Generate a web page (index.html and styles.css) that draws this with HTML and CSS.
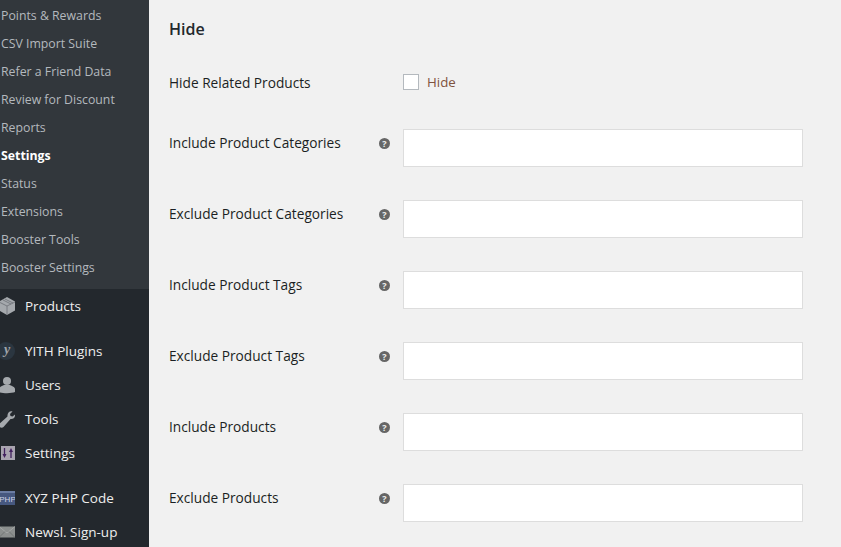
FILE: index.html
```html
<!DOCTYPE html>
<html lang="en">
<head>
    <meta charset="UTF-8">
    <title>Settings</title>
    <link rel="stylesheet" href="styles.css">
</head>
<body>
    <div class="sidebar">
        <ul class="submenu">
            <li>Points &amp; Rewards</li>
            <li>CSV Import Suite</li>
            <li>Refer a Friend Data</li>
            <li>Review for Discount</li>
            <li>Reports</li>
            <li class="current">Settings</li>
            <li>Status</li>
            <li>Extensions</li>
            <li>Booster Tools</li>
            <li>Booster Settings</li>
        </ul>
        <ul class="menu">
            <li>
                <svg class="icon" viewBox="0 0 15 18"><path fill="#a5a9ad" d="M-1 4.500 7 0l8 4.500v9L7 18l-8-4.500z"/><path fill="none" stroke="#6c7076" stroke-width=".8" d="M-1 5l8 4 8-4M7 9v9M3 3l8 4M5 2l8 4"/></svg>
                Products
            </li>
            <li class="gap-before">
                <svg class="icon" viewBox="0 0 15 18"><circle cx="6" cy="9" r="9" fill="#2b3640"/><text x="7" y="12" class="yith">y</text></svg>
                YITH Plugins
            </li>
            <li>
                <svg class="icon" viewBox="0 0 15 18"><circle cx="7" cy="5" r="4" fill="#a5a9ad"/><path fill="#a5a9ad" d="M-1 16v-3c0-2 3-3 5-4h6c2 1 5 2 5 4v3c-3 1.500-13 1.500-16 0z"/></svg>
                Users
            </li>
            <li>
                <svg class="icon" viewBox="0 0 15 18"><path fill="#a5a9ad" d="M15 4.500c.5 2.500-1.500 5-4.500 4.500L3.500 17C2.500 18 .5 17.800-.300 17c-1-1-.8-2.700 0-3.600L7.500 6.500C7 3.500 9.500.500 12.500 1.500L10 4l.5 2 2 .5z"/></svg>
                Tools
            </li>
            <li>
                <svg class="icon" viewBox="0 0 15 18"><rect x="1" y="2" width="14" height="14" fill="#a9a4b0"/><path fill="none" stroke="#43225f" stroke-width="1.300" d="M4.500 4v8M11 7v7"/><path fill="#43225f" d="M2.500 10h4L4.500 14zM9 8l2-4 2 4z"/></svg>
                Settings
            </li>
            <li class="gap-before">
                <svg class="icon" viewBox="0 0 15 18"><rect x="-1" y="2" width="16" height="14" fill="#46587f"/><rect x="-1" y="2" width="16" height="2" fill="#6b7da3"/><text x="7.500" y="12.500" class="php">PHP</text></svg>
                XYZ PHP Code
            </li>
            <li>
                <svg class="icon" viewBox="0 0 15 18"><rect x="-1" y="3.500" width="16" height="11" fill="#8b8f8e"/><path fill="none" stroke="#a9adac" stroke-width=".8" d="M-1 3.500l8 6.500 8-6.500"/><path fill="none" stroke="#6a6e6e" stroke-width=".8" d="M-1 14.500l6-6M15 14.500l-6-6"/></svg>
                Newsl. Sign-up
            </li>
        </ul>
    </div>

    <div class="content">
        <h2>Hide</h2>
        <div class="row first">
            <div class="label">Hide Related Products</div>
            <label class="check"><span class="box"></span>Hide</label>
        </div>
        <div class="row">
            <div class="label">Include Product Categories<span class="help">?</span></div>
            <div class="field"></div>
        </div>
        <div class="row">
            <div class="label">Exclude Product Categories<span class="help">?</span></div>
            <div class="field"></div>
        </div>
        <div class="row">
            <div class="label">Include Product Tags<span class="help">?</span></div>
            <div class="field"></div>
        </div>
        <div class="row">
            <div class="label">Exclude Product Tags<span class="help">?</span></div>
            <div class="field"></div>
        </div>
        <div class="row">
            <div class="label">Include Products<span class="help">?</span></div>
            <div class="field"></div>
        </div>
        <div class="row">
            <div class="label">Exclude Products<span class="help">?</span></div>
            <div class="field"></div>
        </div>
    </div>
</body>
</html>
```

FILE: styles.css
```css
html, body {
    margin: 0;
    height: 547px;
    overflow: hidden;
}

body {
    display: flex;
    font-family: "Open Sans", sans-serif;
    font-size: 13px;
    background-color: #f1f1f1;
    color: #23282d;
}

ul {
    list-style: none;
    margin: 0;
    padding: 0;
}

.sidebar {
    width: 149px;
    flex-shrink: 0;
    background-color: #23282d;
}

.submenu {
    background-color: #32373c;
    padding: 2px 0 8px 1px;
    height: 279px;
}

.submenu li {
    height: 28px;
    line-height: 27px;
    color: #b4b9be;
    font-size: 12.300px;
    white-space: nowrap;
}

.submenu .current {
    color: #fff;
    font-weight: 700;
}

.menu li {
    height: 34px;
    display: flex;
    align-items: center;
    gap: 10px;
    font-size: 13.500px;
    color: #eee;
    white-space: nowrap;
}

.menu .gap-before {
    margin-top: 11px;
}

.icon {
    width: 15px;
    height: 18px;
    flex-shrink: 0;
    overflow: hidden;
}

.php {
    font-family: "Liberation Sans", sans-serif;
    font-size: 8px;
    fill: #cdd4e4;
    text-anchor: middle;
}

.yith {
    font-family: "Liberation Serif", serif;
    font-size: 14px;
    font-style: italic;
    font-weight: 700;
    fill: #a0a5aa;
    text-anchor: middle;
}

.content {
    flex: 1;
    padding-left: 20px;
}

h2 {
    margin: 0;
    padding-top: 18px;
    height: 40px;
    line-height: 23px;
    font-size: 16px;
    font-weight: 600;
}

.row {
    display: flex;
    height: 71px;
}

.row.first {
    align-items: flex-start;
}

.row.first .label {
    padding-top: 15px;
}

.label {
    width: 234px;
    flex-shrink: 0;
    position: relative;
    font-size: 13.700px;
    font-weight: 500;
    color: #1b1f23;
    line-height: 20px;
    padding-top: 4px;
}

.help {
    position: absolute;
    left: 210px;
    top: 9px;
    width: 11px;
    height: 11px;
    border-radius: 50%;
    background-color: #666;
    color: #eee;
    font-size: 9px;
    font-weight: 700;
    line-height: 11px;
    text-align: center;
}

.field {
    width: 398px;
    height: 36px;
    background-color: #fff;
    border: 1px solid #ddd;
}

.check {
    display: flex;
    align-items: center;
    gap: 8px;
    color: #7f5340;
    padding-top: 14px;
    font-size: 13.300px;
    line-height: 20px;
}

.box {
    width: 14px;
    height: 14px;
    background-color: #fff;
    border: 1px solid #b4b9be;
}
```
